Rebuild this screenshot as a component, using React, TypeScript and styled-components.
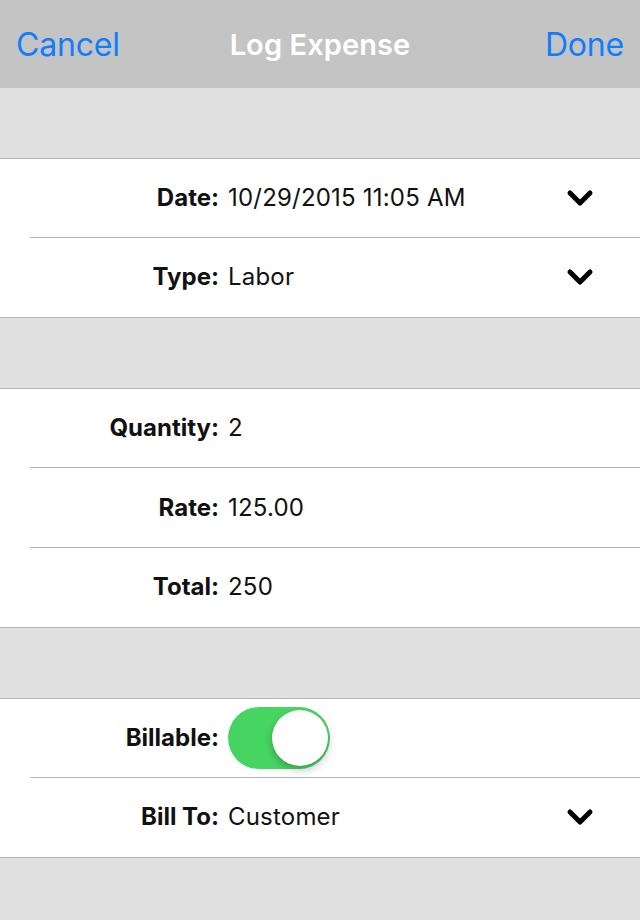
import React from "react";
import styled, { createGlobalStyle } from "styled-components";

const Global = createGlobalStyle`
  html, body { margin: 0; padding: 0; background: #e0e0e0; }
  body { font-family: Inter, "Noto Sans", "Liberation Sans", sans-serif; }
  #root { min-height: 920px; background: #e0e0e0; }
`;

const Page = styled.div`
  width: 640px;
  height: 920px;
  background: #e0e0e0;
  display: flex;
  flex-direction: column;
  overflow: hidden;
`;

const NavBar = styled.div`
  height: 88px;
  background: #c4c4c4;
  display: flex;
  align-items: center;
  justify-content: space-between;
  padding: 0 16px 0 16px;
  box-sizing: border-box;
  position: relative;
`;

const NavButton = styled.span`
  color: #127dfa;
  font-size: 32px;
  font-weight: 400;
  letter-spacing: -0.2px;
`;

const Title = styled.span`
  position: absolute;
  left: 0;
  right: 0;
  text-align: center;
  color: #ffffff;
  font-size: 29px;
  font-weight: 600;
  letter-spacing: 0.1px;
  pointer-events: none;
`;

const Spacer = styled.div<{ $h: number }>`
  height: ${(p) => p.$h}px;
  background: #e0e0e0;
`;

const Group = styled.div`
  background: #ffffff;
  border-top: 1px solid #b2b2b2;
  border-bottom: 1px solid #b2b2b2;
`;

const Row = styled.div<{ $last?: boolean; $tall?: boolean }>`
  height: ${(p) => (p.$tall ? 80 : 79)}px;
  display: flex;
  align-items: center;
  position: relative;
  &::after {
    content: "";
    display: ${(p) => (p.$last ? "none" : "block")};
    position: absolute;
    left: 30px;
    right: 0;
    bottom: 0;
    height: 1px;
    background: #b2b2b2;
  }
`;

const Label = styled.span`
  width: 219px;
  text-align: right;
  font-size: 24px;
  font-weight: 700;
  color: #111;
  flex-shrink: 0;
  margin-top: -2px;
`;

const Value = styled.span`
  margin-left: 9px;
  font-size: 24px;
  font-weight: 400;
  letter-spacing: 0.2px;
  color: #111;
  flex: 1;
  margin-top: -2px;
`;

const Chevron = styled.svg`
  width: 28px;
  height: 20px;
  margin-right: 46px;
  flex-shrink: 0;
  margin-top: -2px;
`;

const Toggle = styled.div`
  margin-left: 9px;
  width: 102px;
  height: 62px;
  border-radius: 31px;
  background: linear-gradient(90deg, #45d461, #4cd864);
  position: relative;
  margin-top: -2px;
`;

const Knob = styled.div`
  position: absolute;
  right: 2px;
  top: 3px;
  width: 56px;
  height: 56px;
  border-radius: 50%;
  background: #fff;
  box-shadow: 0 4px 8px rgba(0, 0, 0, 0.25), 0 0 1px rgba(0, 0, 0, 0.2);
`;

const Down = () => (
  <Chevron viewBox="0 0 28 20">
    <path
      d="M4 5 L14 15 L24 5"
      fill="none"
      stroke="#000"
      strokeWidth="5"
      strokeLinecap="round"
      strokeLinejoin="round"
    />
  </Chevron>
);

export default function App() {
  return (
    <Page>
      <Global />
      <NavBar>
        <NavButton>Cancel</NavButton>
        <Title>Log Expense</Title>
        <NavButton>Done</NavButton>
      </NavBar>
      <Spacer $h={70} />
      <Group>
        <Row>
          <Label>Date:</Label>
          <Value>10/29/2015 11:05 AM</Value>
          <Down />
        </Row>
        <Row $last>
          <Label>Type:</Label>
          <Value>Labor</Value>
          <Down />
        </Row>
      </Group>
      <Spacer $h={70} />
      <Group>
        <Row>
          <Label>Quantity:</Label>
          <Value>2</Value>
        </Row>
        <Row $tall>
          <Label>Rate:</Label>
          <Value>125.00</Value>
        </Row>
        <Row $last>
          <Label>Total:</Label>
          <Value>250</Value>
        </Row>
      </Group>
      <Spacer $h={70} />
      <Group>
        <Row>
          <Label>Billable:</Label>
          <Toggle>
            <Knob />
          </Toggle>
        </Row>
        <Row $last>
          <Label>Bill To:</Label>
          <Value>Customer</Value>
          <Down />
        </Row>
      </Group>
    </Page>
  );
}
